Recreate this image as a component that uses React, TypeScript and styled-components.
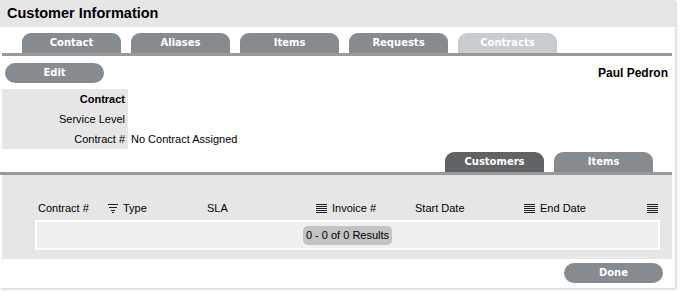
import React from "react";
import styled, { createGlobalStyle } from "styled-components";

const GlobalStyle = createGlobalStyle`
  html, body {
    margin: 0;
    padding: 0;
    background: #ffffff;
  }
  body {
    font-family: "Liberation Sans", Arial, sans-serif;
    font-size: 11px;
    color: #000000;
  }
`;

const mainTabs = [
  { label: "Contact", active: false },
  { label: "Aliases", active: false },
  { label: "Items", active: false },
  { label: "Requests", active: false },
  { label: "Contracts", active: true },
];

const infoRows = [
  { label: "Contract", value: "", heading: true },
  { label: "Service Level", value: "" },
  { label: "Contract #", value: "No Contract Assigned" },
];

const columns: { label: string; icon?: "filter" | "lines" }[] = [
  { label: "Contract #" },
  { label: "Type", icon: "filter" },
  { label: "SLA" },
  { label: "Invoice #", icon: "lines" },
  { label: "Start Date" },
  { label: "End Date", icon: "lines" },
  { label: "", icon: "lines" },
];

const FilterIcon = () => (
  <svg width="10" height="10" viewBox="0 0 10 10" shapeRendering="crispEdges">
    <rect x="0" y="1" width="10" height="1" fill="#222" />
    <rect x="1" y="4" width="8" height="1" fill="#222" />
    <rect x="3" y="7" width="4" height="1" fill="#222" />
    <rect x="4" y="9" width="2" height="1" fill="#222" />
  </svg>
);

const LinesIcon = () => (
  <svg width="11" height="10" viewBox="0 0 11 10" shapeRendering="crispEdges">
    {[1, 3, 5, 7, 9].map((y) => (
      <rect key={y} x="0" y={y} width="11" height="1" fill="#222" />
    ))}
  </svg>
);

export default function App() {
  return (
    <Page>
      <GlobalStyle />
      <Panel>
        <Header>Customer Information</Header>

        <TabStrip>
          {mainTabs.map((t) => (
            <Tab key={t.label} $state={t.active ? "current" : "normal"}>
              {t.label}
            </Tab>
          ))}
        </TabStrip>

        <ActionRow>
          <PillButton>Edit</PillButton>
          <CustomerName>Paul Pedron</CustomerName>
        </ActionRow>

        <InfoTable>
          {infoRows.map((r) => (
            <InfoRow key={r.label}>
              <InfoLabel $bold={!!r.heading}>{r.label}</InfoLabel>
              <InfoValue>{r.value}</InfoValue>
            </InfoRow>
          ))}
        </InfoTable>

        <SubTabStrip>
          <Tab $state="selected">Customers</Tab>
          <Tab $state="normal">Items</Tab>
        </SubTabStrip>

        <ListArea>
          <ColumnHeader>
            {columns.map((c, i) => (
              <HeaderCell key={i}>
                {c.icon === "filter" && <FilterIcon />}
                {c.icon === "lines" && <LinesIcon />}
                {c.label && <span>{c.label}</span>}
              </HeaderCell>
            ))}
          </ColumnHeader>
          <ResultsBox>
            <ResultsBadge>0 - 0 of 0 Results</ResultsBadge>
          </ResultsBox>
        </ListArea>

        <Footer>
          <PillButton>Done</PillButton>
        </Footer>
      </Panel>
    </Page>
  );
}

const Page = styled.div`
  width: 680px;
  height: 292px;
  overflow: hidden;
`;

const Panel = styled.div`
  width: 675px;
  height: 288px;
  background: #ffffff;
  box-shadow: 1px 1px 3px rgba(0, 0, 0, 0.22);
  display: flex;
  flex-direction: column;
`;

const Header = styled.h1`
  margin: 0;
  height: 27px;
  background: #e6e6e6;
  padding: 0 7px;
  font-size: 14.5px;
  font-weight: bold;
  line-height: 27px;
`;

const TabStrip = styled.div`
  display: flex;
  gap: 10px;
  margin: 6px 3px 0 2px;
  padding-left: 20px;
  border-bottom: 3px solid #999999;
`;

const tabColors = {
  normal: "#858b8f",
  current: "#c8cbcf",
  selected: "#5f6366",
};

const Tab = styled.div<{ $state: "normal" | "current" | "selected" }>`
  width: 99px;
  height: 20px;
  border-radius: 9px 9px 0 0;
  background: ${(p) => tabColors[p.$state]};
  color: #ffffff;
  font-family: "DejaVu Sans", Verdana, sans-serif;
  font-size: 10px;
  font-weight: bold;
  line-height: 20px;
  text-align: center;
`;

const ActionRow = styled.div`
  display: flex;
  align-items: center;
  justify-content: space-between;
  margin: 7px 7px 0 5px;
`;

const PillButton = styled.div`
  width: 99px;
  height: 20px;
  border-radius: 10px;
  background: #858b8f;
  color: #ffffff;
  font-family: "DejaVu Sans", Verdana, sans-serif;
  font-size: 10px;
  font-weight: bold;
  line-height: 20px;
  text-align: center;
`;

const CustomerName = styled.div`
  font-size: 12px;
  font-weight: bold;
`;

const InfoTable = styled.div`
  display: flex;
  flex-direction: column;
  margin: 6px 0 0 2px;
`;

const InfoRow = styled.div`
  display: flex;
  height: 20px;
  align-items: stretch;
`;

const InfoLabel = styled.div<{ $bold: boolean }>`
  width: 126px;
  padding-right: 3px;
  box-sizing: border-box;
  background: #e6e6e6;
  text-align: right;
  line-height: 20px;
  font-weight: ${(p) => (p.$bold ? "bold" : "normal")};
`;

const InfoValue = styled.div`
  padding-left: 3px;
  line-height: 20px;
`;

const SubTabStrip = styled.div`
  display: flex;
  justify-content: flex-end;
  gap: 10px;
  margin: 3px 3px 0 0;
  padding-right: 19px;
  border-bottom: 3px solid #999999;
`;

const ListArea = styled.div`
  background: #e6e6e6;
  margin: 0 3px 0 2px;
  padding: 26px 12px 9px 33px;
`;

const ColumnHeader = styled.div`
  display: grid;
  grid-template-columns: 70px 99px 109px 99px 109px 123px auto;
  height: 14px;
  align-items: center;
  padding-left: 3px;
`;

const HeaderCell = styled.div`
  display: flex;
  align-items: center;
  gap: 5px;
  white-space: nowrap;
`;

const ResultsBox = styled.div`
  margin-top: 5px;
  border: 2px solid #ffffff;
  background: #efefef;
  height: 26px;
  display: flex;
  align-items: center;
  justify-content: center;
`;

const ResultsBadge = styled.div`
  background: #c3c3c3;
  border-radius: 5px;
  padding: 0 3px;
  height: 19px;
  line-height: 19px;
  font-size: 11px;
`;

const Footer = styled.div`
  display: flex;
  justify-content: flex-end;
  margin: 4px 12px 0 0;
`;
